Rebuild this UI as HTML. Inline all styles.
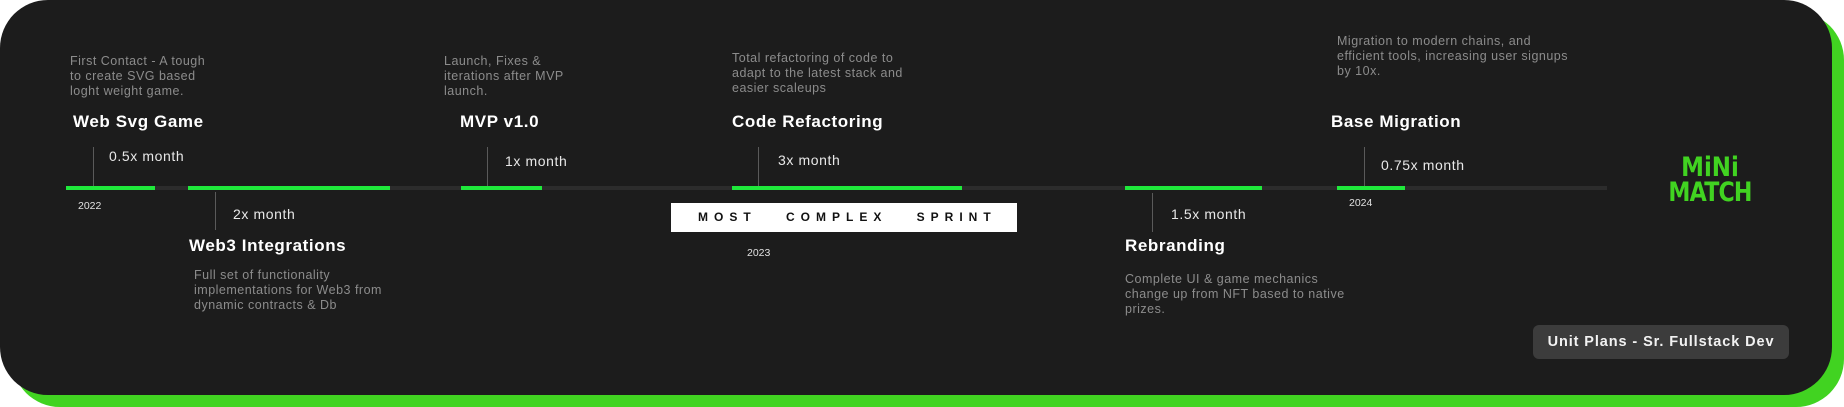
<!DOCTYPE html>
<html><head><meta charset="utf-8"><style>
*{margin:0;padding:0;box-sizing:border-box}
body{width:1844px;height:407px;background:#fff;position:relative;overflow:hidden;font-family:"Liberation Sans",sans-serif}
.g{position:absolute;left:12px;top:12px;width:1832px;height:395px;background:#41d321;border-radius:48px}
.c{position:absolute;left:0;top:0;width:1832px;height:395px;background:#1c1c1c;border-radius:48px}
.a{position:absolute;white-space:nowrap}
.t{font-weight:bold;font-size:17px;color:#fff;letter-spacing:0.6px;line-height:20px}
.d{font-size:12.5px;color:#8c8c8c;line-height:15px;letter-spacing:0.5px}
.m{font-size:14px;color:#e8e8e8;line-height:18px;letter-spacing:0.6px}
.y{font-size:10.5px;color:#e0e0e0;line-height:12px}
.k{position:absolute;width:1px;background:#5a5a5a}
.s{position:absolute;top:186px;height:4px;background:#1fe93b}
</style></head><body>
<div class="g"></div><div class="c"></div>
<div class="a" style="left:66px;top:186px;width:1541px;height:4px;background:#2c2c2c"></div>
<div class="s" style="left:66px;width:89px"></div>
<div class="s" style="left:188px;width:202px"></div>
<div class="s" style="left:461px;width:81px"></div>
<div class="s" style="left:732px;width:230px"></div>
<div class="s" style="left:1125px;width:137px"></div>
<div class="s" style="left:1337px;width:68px"></div>

<div class="k" style="left:93px;top:147px;height:39px"></div>
<div class="k" style="left:487px;top:147px;height:39px"></div>
<div class="k" style="left:758px;top:147px;height:39px"></div>
<div class="k" style="left:1364px;top:147px;height:39px"></div>
<div class="k" style="left:215px;top:192px;height:38px"></div>
<div class="k" style="left:1152px;top:193px;height:39px"></div>

<div class="a d" style="left:70px;top:54px">First Contact - A tough<br>to create SVG based<br>loght weight game.</div>
<div class="a t" style="left:73px;top:112px">Web Svg Game</div>
<div class="a m" style="left:109px;top:147px">0.5x month</div>
<div class="a y" style="left:78px;top:200px">2022</div>

<div class="a m" style="left:233px;top:205px">2x month</div>
<div class="a t" style="left:189px;top:236px">Web3 Integrations</div>
<div class="a d" style="left:194px;top:268px">Full set of functionality<br>implementations for Web3 from<br>dynamic contracts &amp; Db</div>

<div class="a d" style="left:444px;top:54px">Launch, Fixes &amp;<br>iterations after MVP<br>launch.</div>
<div class="a t" style="left:460px;top:112px">MVP v1.0</div>
<div class="a m" style="left:505px;top:152px">1x month</div>

<div class="a d" style="left:732px;top:51px">Total refactoring of code to<br>adapt to the latest stack and<br>easier scaleups</div>
<div class="a t" style="left:732px;top:112px">Code Refactoring</div>
<div class="a m" style="left:778px;top:151px">3x month</div>
<div class="a" style="left:671px;top:203px;width:346px;height:29px;background:#fff;color:#111;font-weight:bold;font-size:12px;letter-spacing:6px;line-height:29px;padding-left:27px;word-spacing:20px">MOST COMPLEX SPRINT</div>
<div class="a y" style="left:747px;top:247px">2023</div>

<div class="a m" style="left:1171px;top:205px">1.5x month</div>
<div class="a t" style="left:1125px;top:236px">Rebranding</div>
<div class="a d" style="left:1125px;top:272px">Complete UI &amp; game mechanics<br>change up from NFT based to native<br>prizes.</div>

<div class="a d" style="left:1337px;top:34px">Migration to modern chains, and<br>efficient tools, increasing user signups<br>by 10x.</div>
<div class="a t" style="left:1331px;top:112px">Base Migration</div>
<div class="a m" style="left:1381px;top:156px">0.75x month</div>
<div class="a y" style="left:1349px;top:197px">2024</div>

<div class="a" style="left:1658px;top:154px;width:104px;text-align:center;color:#41d321;font-weight:900;font-family:'DejaVu Sans','Liberation Sans',sans-serif;line-height:27px">
<div style="font-size:27px;transform:scaleX(0.85)">MiNi</div>
<div style="font-size:27px;transform:scaleX(0.82);margin-top:-2px;letter-spacing:-1px">MATCH</div>
</div>

<div class="a" style="left:1533px;top:325px;width:256px;height:34px;background:#3c3c3c;border-radius:6px;color:#f2f2f2;font-weight:bold;font-size:14.5px;letter-spacing:0.9px;line-height:34px;text-align:center">Unit Plans - Sr. Fullstack Dev</div>
</body></html>
